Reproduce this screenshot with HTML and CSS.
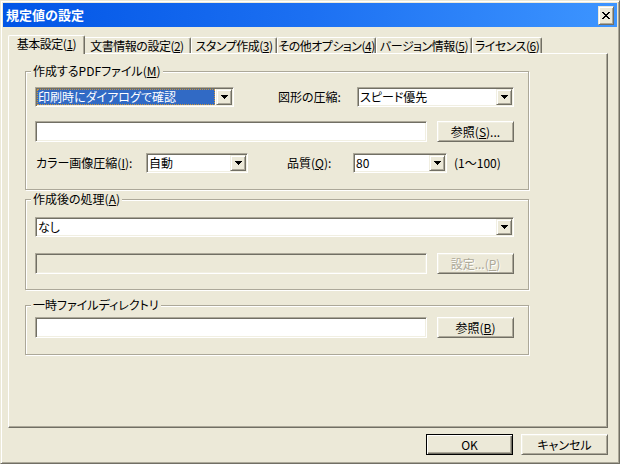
FILE: index.html
```html
<!DOCTYPE html>
<html lang="ja">
<head>
<meta charset="utf-8">
<title>規定値の設定</title>
<link rel="stylesheet" href="styles.css">
</head>
<body>
<div class="window">
  <div class="titlebar">
    <span class="title-text">規定値の設定</span>
    <span class="close-btn"><svg width="8" height="7" viewBox="0 0 8 7" shape-rendering="crispEdges"><path fill="#000" d="M0 0h2v1H0zM6 0h2v1H6zM1 1h2v1H1zM5 1h2v1H5zM2 2h4v1H2zM3 3h2v1H3zM2 4h4v1H2zM1 5h2v1H1zM5 5h2v1H5zM0 6h2v1H0zM6 6h2v1H6z"/></svg></span>
  </div>
  <div class="body">
    <div class="tabstrip">
      <div class="tab active t1">基本設定(<u>1</u>)</div>
      <div class="tab t2">文書情報の設定(<u>2</u>)</div>
      <div class="tab t3">スタンプ作成(<u>3</u>)</div>
      <div class="tab t4">その他オプション(<u>4</u>)</div>
      <div class="tab t5">バージョン情報(<u>5</u>)</div>
      <div class="tab t6">ライセンス(<u>6</u>)</div>
    </div>
    <div class="panel">
      <div class="group g1">
        <div class="legend">作成するPDFファイル(<u>M</u>)</div>
        <div class="row r1">
          <div class="combo c-output"><span class="value sel">印刷時にダイアログで確認</span><span class="drop"><svg width="7" height="4" viewBox="0 0 7 4" shape-rendering="crispEdges"><path fill="#000" d="M0 0h7v1H0zM1 1h5v1H1zM2 2h3v1H2zM3 3h1v1H3z"/></svg></span></div>
          <span class="label l-shape">図形の圧縮:</span>
          <div class="combo c-shape"><span class="value">スピード優先</span><span class="drop"><svg width="7" height="4" viewBox="0 0 7 4" shape-rendering="crispEdges"><path fill="#000" d="M0 0h7v1H0zM1 1h5v1H1zM2 2h3v1H2zM3 3h1v1H3z"/></svg></span></div>
        </div>
        <div class="row r2">
          <div class="input"></div>
          <button class="btn">参照(<u>S</u>)...</button>
        </div>
        <div class="row r3">
          <span class="label l-color">カラー画像圧縮(<u>I</u>):</span>
          <div class="combo c-color"><span class="value">自動</span><span class="drop"><svg width="7" height="4" viewBox="0 0 7 4" shape-rendering="crispEdges"><path fill="#000" d="M0 0h7v1H0zM1 1h5v1H1zM2 2h3v1H2zM3 3h1v1H3z"/></svg></span></div>
          <span class="label l-quality">品質(<u>Q</u>):</span>
          <div class="combo c-quality"><span class="value">80</span><span class="drop"><svg width="7" height="4" viewBox="0 0 7 4" shape-rendering="crispEdges"><path fill="#000" d="M0 0h7v1H0zM1 1h5v1H1zM2 2h3v1H2zM3 3h1v1H3z"/></svg></span></div>
          <span class="label l-range">(1〜100)</span>
        </div>
      </div>

      <div class="group g2">
        <div class="legend">作成後の処理(<u>A</u>)</div>
        <div class="row r1">
          <div class="combo c-full"><span class="value">なし</span><span class="drop"><svg width="7" height="4" viewBox="0 0 7 4" shape-rendering="crispEdges"><path fill="#000" d="M0 0h7v1H0zM1 1h5v1H1zM2 2h3v1H2zM3 3h1v1H3z"/></svg></span></div>
        </div>
        <div class="row r2">
          <div class="input disabled"></div>
          <button class="btn disabled">設定...(<u>P</u>)</button>
        </div>
      </div>

      <div class="group g3">
        <div class="legend">一時ファイルディレクトリ</div>
        <div class="row r1">
          <div class="input"></div>
          <button class="btn">参照(<u>B</u>)</button>
        </div>
      </div>
    </div>
    <div class="dlg-buttons">
      <button class="btn dlg default">OK</button>
      <button class="btn dlg">キャンセル</button>
    </div>
  </div>
</div>
</body>
</html>
```

FILE: styles.css
```css
html, body {
  margin: 0;
  padding: 0;
  background: #ECE9D8;
  overflow: hidden;
}

body {
  font-family: "Noto Sans CJK JP", "Noto Sans", sans-serif;
  font-size: 12px;
  font-feature-settings: "palt";
  color: #000;
}

u {
  text-decoration: underline;
  text-underline-offset: 1px;
}

.window {
  box-sizing: border-box;
  width: 620px;
  height: 464px;
  background: #ECE9D8;
  border: 1px solid;
  border-color: #ECE9D8 #716F64 #716F64 #ECE9D8;
  box-shadow: inset 1px 1px #fff, inset -1px -1px #ACA899;
  padding: 2px;
}

/* ---------- title bar ---------- */
.titlebar {
  height: 24px;
  display: flex;
  align-items: center;
  background: linear-gradient(to right, #0155E6 0%, #1C70F2 50%, #3D95FF 100%);
}

.title-text {
  padding-left: 3px;
  color: #fff;
  font-weight: bold;
  font-size: 13px;
  line-height: 16px;
  font-feature-settings: normal;
  flex: 1;
}

.close-btn {
  box-sizing: border-box;
  width: 16px;
  height: 19px;
  margin-right: 3px;
  background: #ECE9D8;
  border: 1px solid;
  border-color: #ECE9D8 #716F64 #716F64 #ECE9D8;
  box-shadow: inset 1px 1px #fff, inset -1px -1px #ACA899;
  display: flex;
  align-items: center;
  justify-content: center;
}

.close-btn svg {
  display: block;
}

/* ---------- body ---------- */
.body {
  padding: 8px 9px 0 5px;
}

.tabstrip {
  display: flex;
  align-items: flex-end;
  height: 18px;
}

.tab {
  box-sizing: border-box;
  height: 16px;
  padding-top: 1px;
  line-height: 14px;
  letter-spacing: -0.5px;
  text-align: center;
  white-space: nowrap;
  background: #ECE9D8;
  border-top: 1px solid #fff;
  border-left: 1px solid #fff;
  border-right: 1px solid #716F64;
  box-shadow: inset -1px 0 #ACA899;
  border-radius: 2px 2px 0 0;
}

.tab.active {
  height: 19px;
  margin-bottom: -1px;
  margin-right: -2px;
  position: relative;
  z-index: 1;
}

.t1 { width: 77px; }
.t2 { width: 108px; }
.t3 { width: 86px; }
.t4 { width: 99px; }
.t5 { width: 96px; }
.t6 { width: 70px; }

.panel {
  box-sizing: border-box;
  height: 375px;
  border-top: 1px solid #fff;
  border-left: 1px solid #fff;
  border-right: 1px solid #716F64;
  border-bottom: 1px solid #716F64;
  box-shadow: inset -1px -1px #ACA899;
  padding: 17px 0 0 16px;
}

/* ---------- group boxes ---------- */
.group {
  box-sizing: border-box;
  width: 504px;
  border: 1px solid #ACA899;
  box-shadow: inset 1px 1px #fff, 1px 1px #fff;
  padding: 0 14px 16px 9px;
}

.legend {
  width: max-content;
  margin: -8px 0 0 -4px;
  padding: 0 2px;
  line-height: 14px;
  background: #ECE9D8;
}

.g2 {
  margin-top: 9px;
  padding-bottom: 15px;
}

.g3 {
  margin-top: 15px;
}

.row {
  display: flex;
  align-items: center;
}

.g1 .r1 { margin-top: 9px; }
.g1 .r2 { margin-top: 14px; }
.g1 .r3 { margin-top: 11px; }
.g2 .r1 { margin-top: 11px; }
.g2 .r2 { margin-top: 16px; }
.g3 .r1 { margin-top: 5px; }

.label {
  white-space: nowrap;
  line-height: 14px;
}

.l-shape { margin-left: 44px; width: 79px; }
.l-color { width: 111px; padding-left: 1px; box-sizing: border-box; }
.l-quality { margin-left: 39px; width: 66px; }
.l-range { margin-left: 7px; }

/* ---------- combo boxes ---------- */
.combo {
  box-sizing: border-box;
  height: 20px;
  display: flex;
  background: #fff;
  border: 1px solid;
  border-color: #ACA899 #fff #fff #ACA899;
  box-shadow: inset 1px 1px #716F64, inset -1px -1px #F1EFE2;
  padding: 1px;
}

.c-output { width: 199px; }
.c-shape { width: 157px; margin-left: auto; }
.c-color { width: 102px; }
.c-quality { width: 94px; }
.c-full { width: 479px; }

.value {
  flex: 1;
  line-height: 16px;
  padding-left: 1px;
  white-space: nowrap;
  overflow: hidden;
}

.value.sel {
  background: #316AC5;
  color: #fff;
  outline: 1px dotted #CE953A;
  outline-offset: -1px;
  margin-right: 1px;
}

.drop {
  box-sizing: border-box;
  width: 16px;
  height: 16px;
  flex: none;
  background: #ECE9D8;
  border: 1px solid;
  border-color: #F1EFE2 #716F64 #716F64 #F1EFE2;
  box-shadow: inset 1px 1px #fff, inset -1px -1px #ACA899;
  display: flex;
  align-items: center;
  justify-content: center;
}

.drop svg {
  display: block;
}

/* ---------- edits & buttons ---------- */
.input {
  box-sizing: border-box;
  width: 392px;
  height: 21px;
  background: #fff;
  border: 1px solid;
  border-color: #ACA899 #fff #fff #ACA899;
  box-shadow: inset 1px 1px #716F64, inset -1px -1px #F1EFE2;
}

.input.disabled {
  background: #ECE9D8;
}

.btn {
  box-sizing: border-box;
  width: 77px;
  height: 21px;
  margin: 0 0 0 10px;
  padding: 0;
  font: inherit;
  font-feature-settings: "palt";
  line-height: 14px;
  color: #000;
  background: #ECE9D8;
  border: 1px solid;
  border-color: #fff #716F64 #716F64 #fff;
  box-shadow: inset 1px 1px #F1EFE2, inset -1px -1px #ACA899;
  display: flex;
  align-items: center;
  justify-content: center;
  white-space: nowrap;
}

.btn.disabled {
  color: #ACA899;
  text-shadow: 1px 1px #fff;
}

.dlg-buttons {
  display: flex;
  justify-content: flex-end;
  gap: 8px;
  margin-top: 6px;
}

.btn.dlg {
  width: 87px;
  margin: 0;
}

.btn.default {
  border-color: #000;
  box-shadow: inset 1px 1px #fff, inset -1px -1px #716F64, inset -2px -2px #ACA899;
}
```
